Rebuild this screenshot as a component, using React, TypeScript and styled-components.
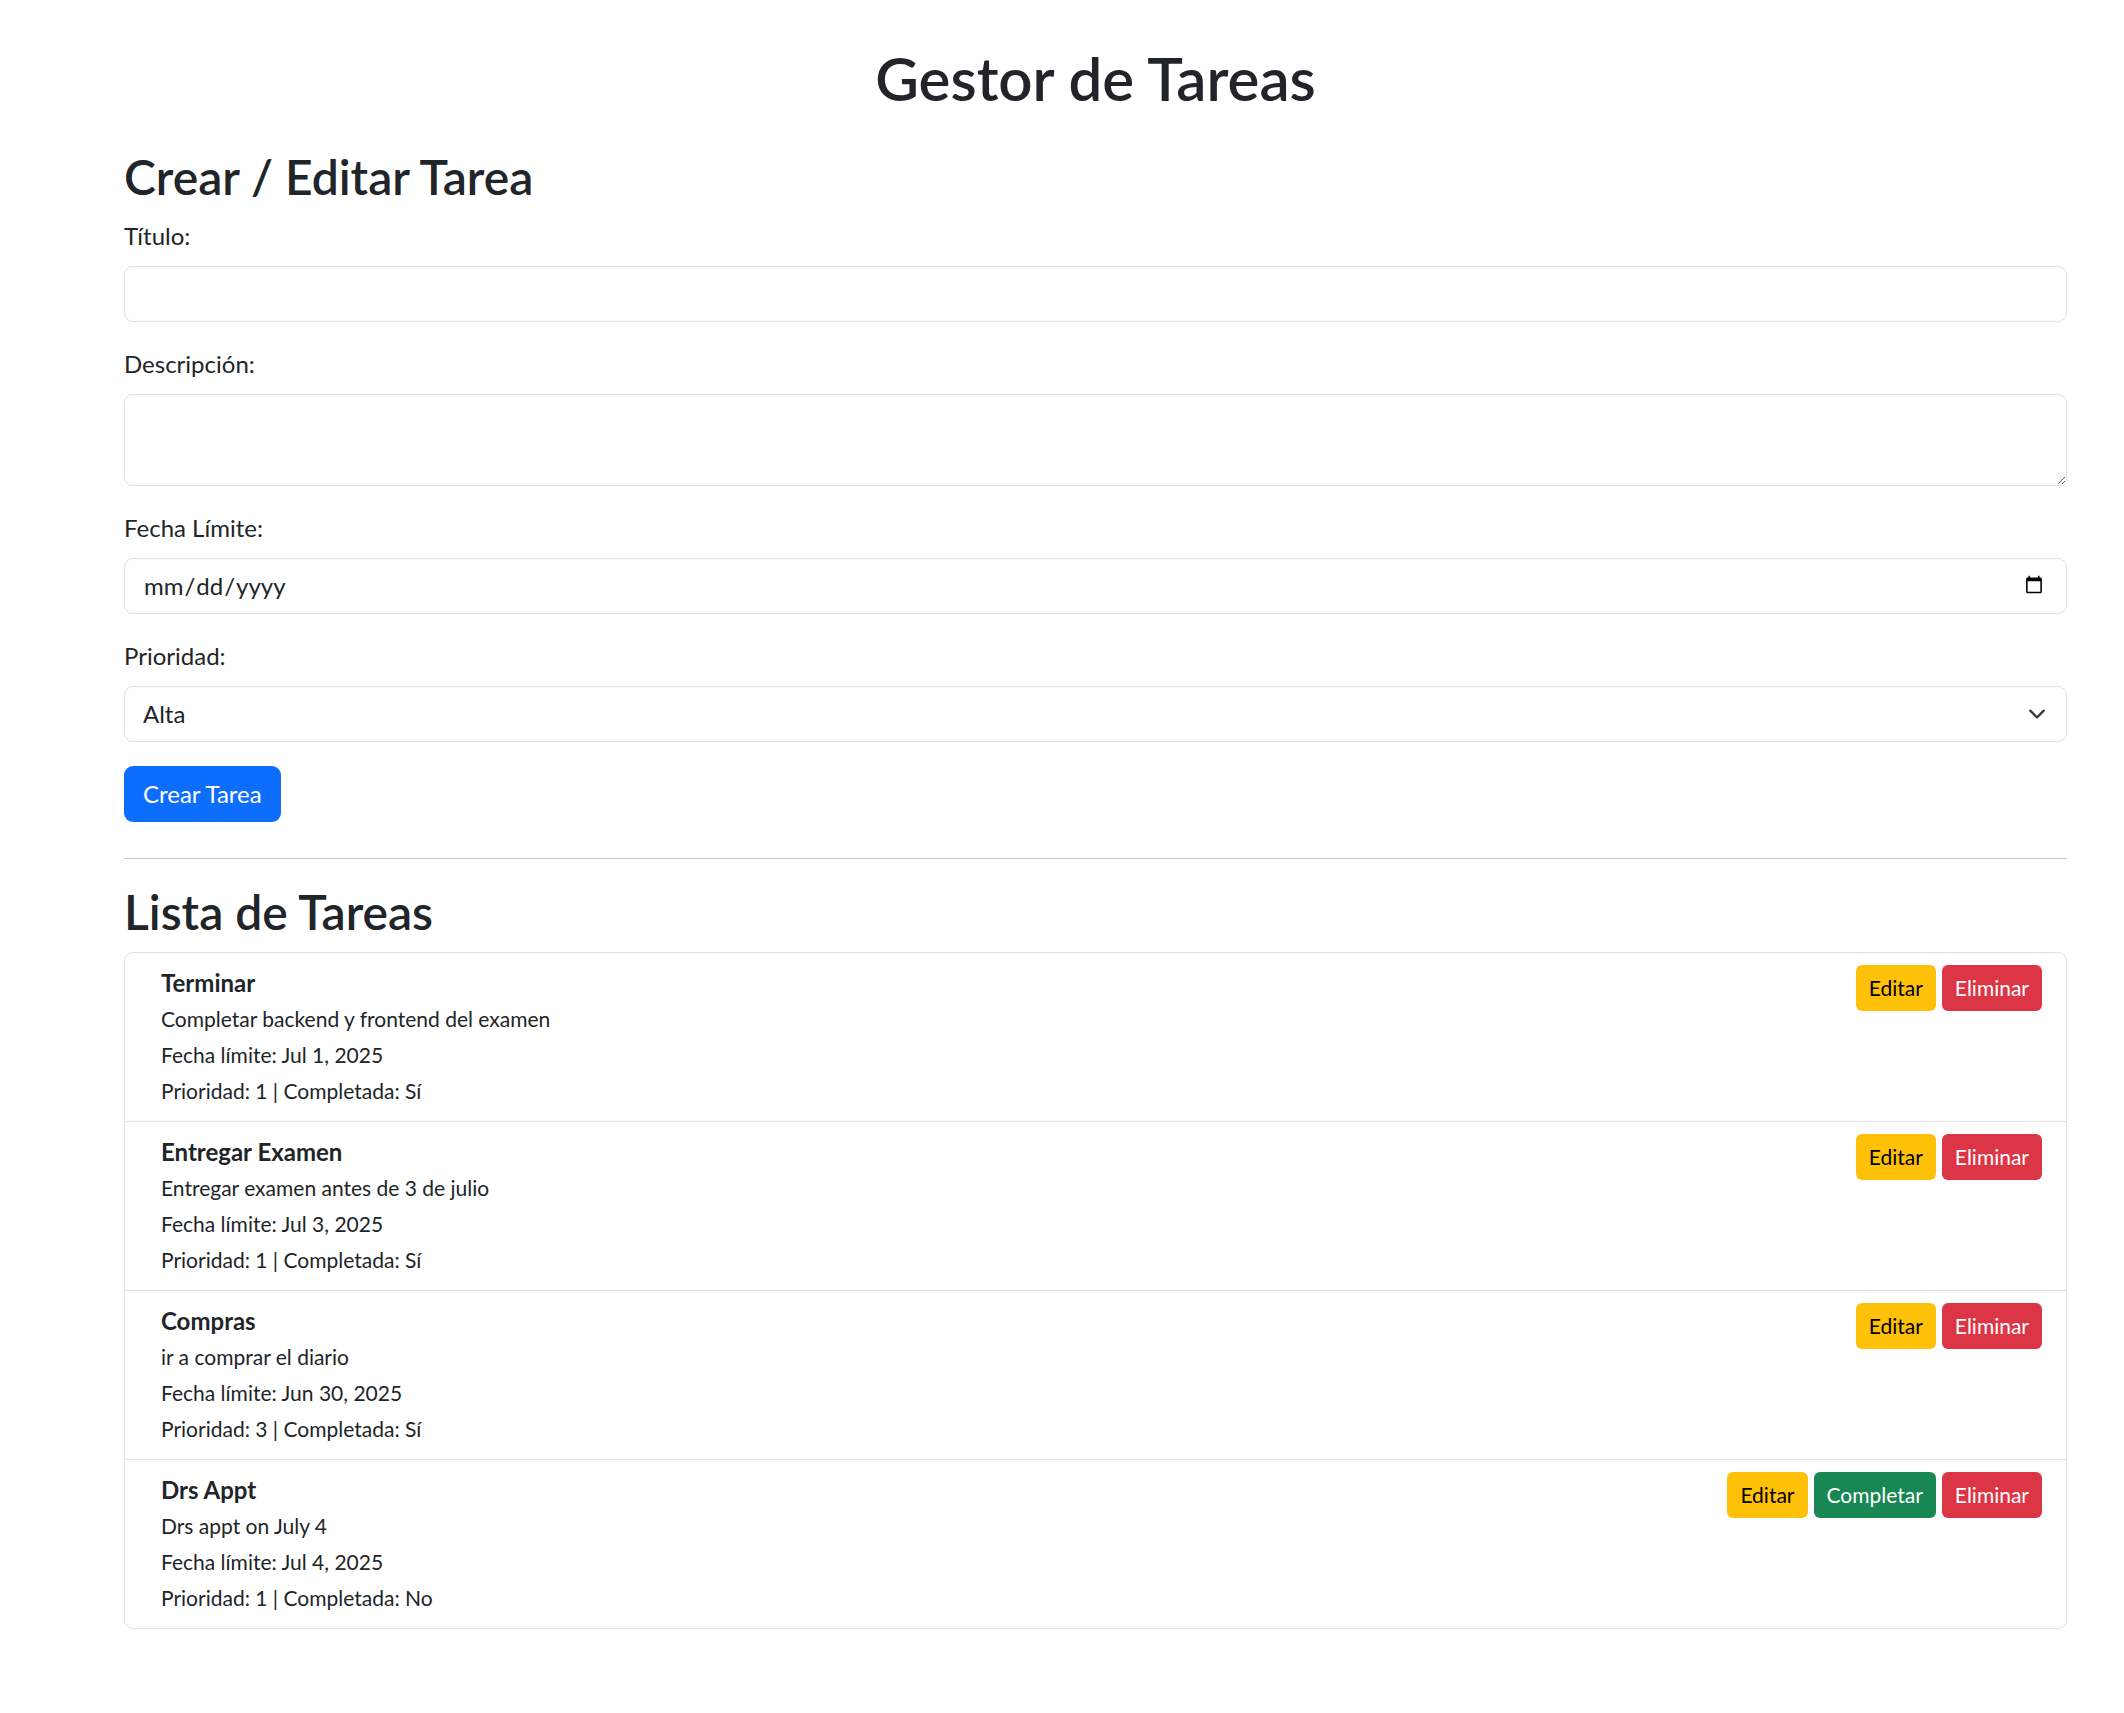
import React from 'react';
import styled, { createGlobalStyle } from 'styled-components';

const GlobalStyle = createGlobalStyle`
  * { box-sizing: border-box; }
  body {
    margin: 0;
    background: #fff;
    color: #212529;
    font-family: Lato, "Noto Sans", "Liberation Sans", sans-serif;
    font-size: 24px;
    line-height: 1.5;
  }
`;

const Container = styled.div`
  max-width: 1943px;
  margin-left: 124px;
  padding: 42px 0 60px;
`;

const PageTitle = styled.h1`
  margin: 0 0 34px;
  font-size: 60px;
  font-weight: 600;
  line-height: 1.2;
  text-align: center;
`;

const SectionTitle = styled.h2`
  margin: 0 0 12px;
  font-size: 48px;
  font-weight: 600;
  line-height: 1.2;
`;

const Field = styled.div`
  margin-bottom: 24px;
`;

const Label = styled.label`
  display: block;
  margin-bottom: 12px;
`;

const inputBase = `
  display: block;
  width: 100%;
  padding: 9px 18px;
  font: inherit;
  color: #212529;
  background: #fff;
  border: 1px solid #dee2e6;
  border-radius: 9px;
  outline: none;
`;

const Input = styled.input`
  ${inputBase}
  height: 56px;

  &::-webkit-calendar-picker-indicator {
    width: 20px;
    height: 21px;
    margin-right: 2px;
  }
`;

const TextArea = styled.textarea`
  ${inputBase}
  height: 92px;
  resize: vertical;
`;

const SelectWrap = styled.div`
  position: relative;
`;

const Select = styled.select`
  ${inputBase}
  height: 56px;
  appearance: none;
  padding-right: 54px;
`;

const Chevron = styled.svg`
  position: absolute;
  right: 18px;
  top: 50%;
  width: 24px;
  height: 18px;
  margin-top: -9px;
  pointer-events: none;
`;

const Button = styled.button<{ $variant: 'primary' | 'warning' | 'success' | 'danger'; $small?: boolean }>`
  display: inline-block;
  font: inherit;
  font-size: ${p => (p.$small ? '21px' : '24px')};
  line-height: 1.5;
  padding: ${p => (p.$small ? '6px 12px' : '9px 18px')};
  border-radius: ${p => (p.$small ? '6px' : '9px')};
  border: 1px solid transparent;
  cursor: pointer;
  color: ${p => (p.$variant === 'warning' ? '#000' : '#fff')};
  background: ${p =>
    p.$variant === 'primary'
      ? '#0d6efd'
      : p.$variant === 'warning'
      ? '#ffc107'
      : p.$variant === 'success'
      ? '#198754'
      : '#dc3545'};
`;

const Divider = styled.hr`
  margin: 36px 0 24px;
  border: 0;
  border-top: 1px solid rgba(33, 37, 41, 0.25);
`;

const ListGroup = styled.ul`
  list-style: none;
  margin: 0;
  padding: 0;
  border: 1px solid #dee2e6;
  border-radius: 9px;
`;

const ListItem = styled.li`
  display: flex;
  justify-content: space-between;
  align-items: flex-start;
  padding: 12px 24px;

  & + & {
    border-top: 1px solid #dee2e6;
  }
`;

const ItemBody = styled.div`
  margin-left: 12px;
  margin-right: auto;
`;

const ItemTitle = styled.div`
  font-weight: 700;
`;

const ItemLine = styled.div`
  font-size: 21px;
  line-height: 36px;
`;

const Actions = styled.div`
  display: flex;
  gap: 6px;
`;

type Task = {
  title: string;
  description: string;
  due: string;
  priority: number;
  done: boolean;
};

const tasks: Task[] = [
  { title: 'Terminar', description: 'Completar backend y frontend del examen', due: 'Jul 1, 2025', priority: 1, done: true },
  { title: 'Entregar Examen', description: 'Entregar examen antes de 3 de julio', due: 'Jul 3, 2025', priority: 1, done: true },
  { title: 'Compras', description: 'ir a comprar el diario', due: 'Jun 30, 2025', priority: 3, done: true },
  { title: 'Drs Appt', description: 'Drs appt on July 4', due: 'Jul 4, 2025', priority: 1, done: false },
];

export default function App() {
  return (
    <>
      <GlobalStyle />
      <Container>
        <PageTitle>Gestor de Tareas</PageTitle>

        <SectionTitle>Crear / Editar Tarea</SectionTitle>
        <form onSubmit={e => e.preventDefault()}>
          <Field>
            <Label htmlFor="titulo">Título:</Label>
            <Input id="titulo" type="text" />
          </Field>
          <Field>
            <Label htmlFor="descripcion">Descripción:</Label>
            <TextArea id="descripcion" rows={2} />
          </Field>
          <Field>
            <Label htmlFor="fecha">Fecha Límite:</Label>
            <Input id="fecha" type="date" />
          </Field>
          <Field>
            <Label htmlFor="prioridad">Prioridad:</Label>
            <SelectWrap>
              <Select id="prioridad" defaultValue="1">
                <option value="1">Alta</option>
                <option value="2">Media</option>
                <option value="3">Baja</option>
              </Select>
              <Chevron viewBox="0 0 16 16">
                <path fill="none" stroke="#343a40" strokeLinecap="round" strokeLinejoin="round" strokeWidth="2" d="m2 5 6 6 6-6" />
              </Chevron>
            </SelectWrap>
          </Field>
          <Button type="submit" $variant="primary">Crear Tarea</Button>
        </form>

        <Divider />

        <SectionTitle>Lista de Tareas</SectionTitle>
        <ListGroup>
          {tasks.map(t => (
            <ListItem key={t.title}>
              <ItemBody>
                <ItemTitle>{t.title}</ItemTitle>
                <ItemLine>{t.description}</ItemLine>
                <ItemLine>Fecha límite: {t.due}</ItemLine>
                <ItemLine>Prioridad: {t.priority} | Completada: {t.done ? 'Sí' : 'No'}</ItemLine>
              </ItemBody>
              <Actions>
                <Button $small $variant="warning">Editar</Button>
                {!t.done && <Button $small $variant="success">Completar</Button>}
                <Button $small $variant="danger">Eliminar</Button>
              </Actions>
            </ListItem>
          ))}
        </ListGroup>
      </Container>
    </>
  );
}
